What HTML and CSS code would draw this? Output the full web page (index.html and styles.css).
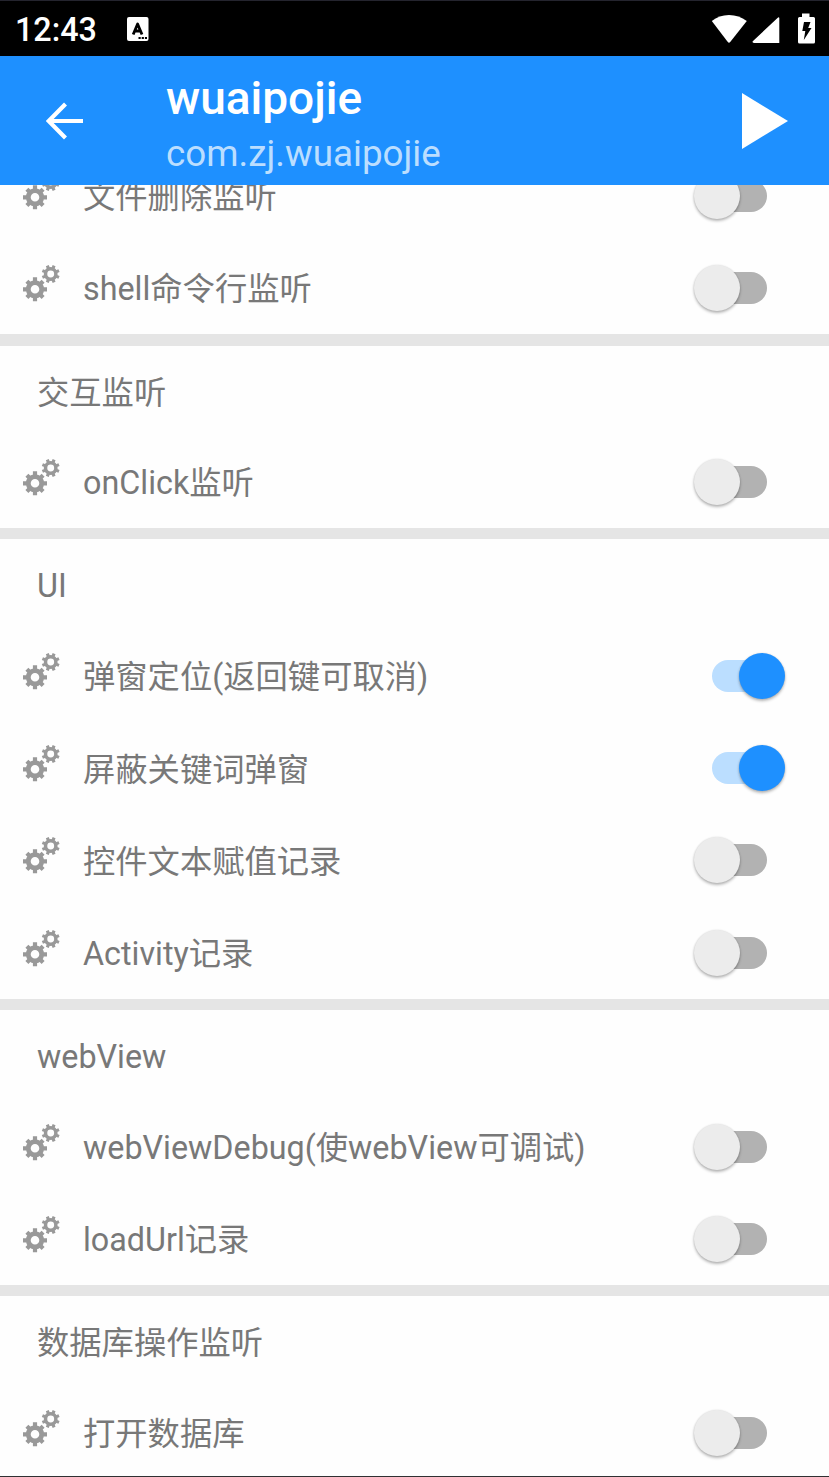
FILE: index.html
```html
<!DOCTYPE html>
<html lang="zh-CN">
<head>
<meta charset="utf-8">
<title>wuaipojie</title>
<link rel="stylesheet" href="styles.css">
</head>
<body>
<svg class="defs" width="0" height="0">
  <symbol id="gears" viewBox="0 0 40 40">
    <g fill="none" stroke="#999">
      <circle cx="14" cy="25.300" r="6.700" stroke-width="4.800"/>
      <path stroke-width="4.200" d="M14 13.300v5M14 32.300v5M2 25.300h5M21 25.300h5M5.900 17.200l3.400 3.400M18.700 30l3.400 3.400M5.900 33.400l3.400-3.400M18.700 20.600l3.400-3.400"/>
      <circle cx="29.700" cy="10" r="5.200" stroke-width="3.500"/>
      <path stroke-width="3.100" d="M26.300 1.700l1.500 3.700M33.100 1.700l-1.500 3.700M26.300 18.300l1.500-3.700M33.100 18.300l-1.500-3.700M21.400 6.600l3.700 1.500M21.400 13.400l3.700-1.500M38 6.600l-3.700 1.500M38 13.400l-3.700-1.500"/>
    </g>
  </symbol>
</svg>
<div class="screen">
  <div class="status">
    <span class="clock">12:43</span>
    <svg class="notice" width="22" height="24" viewBox="0 0 22 24"><rect width="21.500" height="24" rx="2" fill="#fff"/><path d="M6.200 17.500L10.600 7l4.400 10.500M8 14h5.200" fill="none" stroke="#000" stroke-width="2.800" stroke-linejoin="round"/><path d="M11.500 21h8.500" stroke="#000" stroke-width="2.200" stroke-dasharray="2.200 1"/></svg>
    <svg class="signals" width="105" height="32" viewBox="0 0 105 32" fill="#fff"><path d="M.8 8Q8 2 18 2t17.800 6L19.200 29q-1.200 1.300-2.400 0z"/><path d="M68.300 5v25H43q-2.400-.2-1-2L66.500 5q1.500-1.500 1.800 0z"/><path d="M91 .5h7.500v3.500h4q1.500 0 1.500 1.500V29q0 1.500-1.500 1.500h-14q-1.500 0-1.500-1.500V5.500Q87 4 88.500 4H91z"/><path fill="#000" d="M93 9h6.500l-2.300 6h3.300l-7.700 12 1.500-9h-3z"/></svg>
  </div>
  <header class="bar">
    <svg class="back" width="38" height="38" viewBox="0 0 38 38" fill="none" stroke="#fff" stroke-width="4.200"><path d="M37 19H3.500M19.500 2L2.700 19l16.800 17"/></svg>
    <div class="titles"><div class="title">wuaipojie</div><div class="subtitle">com.zj.wuaipojie</div></div>
    <svg class="play" width="46" height="56" viewBox="0 0 46 56"><path d="M0 0l46 28L0 56z" fill="#fff"/></svg>
  </header>
  <main class="viewport">
    <div class="list">
      <section class="group">
        <div class="row"><svg class="gears"><use href="#gears"/></svg><span class="label">文件删除监听</span><i class="switch"></i></div>
        <div class="row"><svg class="gears"><use href="#gears"/></svg><span class="label">shell命令行监听</span><i class="switch"></i></div>
      </section>
      <section class="group">
        <h2 class="heading">交互监听</h2>
        <div class="row"><svg class="gears"><use href="#gears"/></svg><span class="label">onClick监听</span><i class="switch"></i></div>
      </section>
      <section class="group">
        <h2 class="heading">UI</h2>
        <div class="row"><svg class="gears"><use href="#gears"/></svg><span class="label">弹窗定位(返回键可取消)</span><i class="switch on"></i></div>
        <div class="row"><svg class="gears"><use href="#gears"/></svg><span class="label">屏蔽关键词弹窗</span><i class="switch on"></i></div>
        <div class="row"><svg class="gears"><use href="#gears"/></svg><span class="label">控件文本赋值记录</span><i class="switch"></i></div>
        <div class="row"><svg class="gears"><use href="#gears"/></svg><span class="label">Activity记录</span><i class="switch"></i></div>
      </section>
      <section class="group">
        <h2 class="heading">webView</h2>
        <div class="row"><svg class="gears"><use href="#gears"/></svg><span class="label">webViewDebug(使webView可调试)</span><i class="switch"></i></div>
        <div class="row"><svg class="gears"><use href="#gears"/></svg><span class="label">loadUrl记录</span><i class="switch"></i></div>
      </section>
      <section class="group">
        <h2 class="heading">数据库操作监听</h2>
        <div class="row"><svg class="gears"><use href="#gears"/></svg><span class="label">打开数据库</span><i class="switch"></i></div>
      </section>
    </div>
  </main>
</div>
</body>
</html>
```
FILE: styles.css
```css
* { box-sizing: border-box; }
body { margin: 0; background: #fefefe; font-family: Roboto, "Noto Sans CJK SC", sans-serif; }
.defs { display: block; }
.screen { width: 829px; height: 1477px; display: flex; flex-direction: column; overflow: hidden; border-bottom: 1px solid #303032; }
.status { flex: none; height: 56px; display: flex; align-items: center; padding: 3px 13px 0 15px; background: #000; border-top: 1px solid #24242e; }
.clock { width: 112px; color: #fff; font-size: 32.300px; font-weight: 500; line-height: 40px; }
.notice { flex: none; margin-top: -2px; }
.signals { margin: -3px 0 0 auto; }
.bar { flex: none; height: 129.300px; display: flex; align-items: center; padding: 0 41px 0 46px; background: #1e90ff; }
.back { flex: none; margin-right: 82px; }
.titles { flex: 1; padding-top: 12px; }
.title { color: #fff; font-size: 46px; font-weight: 500; line-height: 55px; }
.subtitle { color: #bbdeff; font-size: 36.800px; line-height: 56px; }
.viewport { flex: 1; min-height: 0; overflow: hidden; }
.list { margin-top: -35.800px; }
.group + .group::before { content: ""; display: block; height: 11.500px; background: #e5e5e5; }
.heading { margin: 0; height: 90.100px; padding: 3px 0 0 37px; line-height: 88px; font-size: 32.300px; font-weight: 400; color: #787878; }
.row { height: 92.300px; display: flex; align-items: center; padding: 0 62px 0 21px; }
.gears { width: 40px; height: 40px; flex: none; margin: 0 22px 8px 0; }
.label { flex: 1; padding-top: 3px; white-space: nowrap; font-size: 32.300px; line-height: 48px; color: #787878; }
.switch { flex: none; position: relative; width: 55px; height: 32px; border-radius: 16px; background: #b2b2b2; }
.switch::after { content: ""; position: absolute; left: -18.500px; top: -7px; width: 46px; height: 46px; border-radius: 50%; background: #ececec; box-shadow: 0 2px 3px rgba(0,0,0,.28), 0 0 2px rgba(0,0,0,.12); }
.switch.on { background: #bbdeff; }
.switch.on::after { left: 27px; background: #1e90ff; }
```
